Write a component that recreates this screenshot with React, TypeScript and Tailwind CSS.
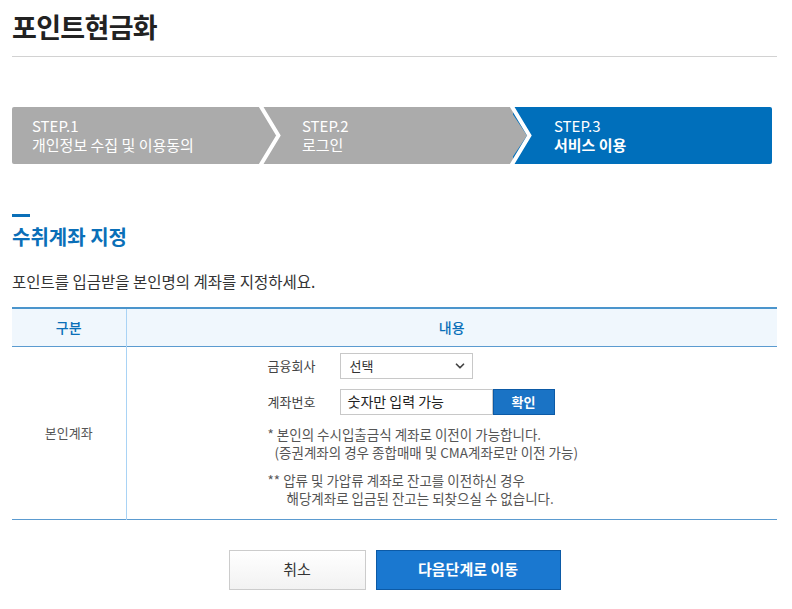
import { ChevronDown } from 'lucide-react';

const font = { fontFamily: '"Noto Sans CJK KR", "Noto Sans", sans-serif' };

function Chevron({ left, fill }: { left: number; fill: string }) {
  return (
    <svg
      className="absolute top-0"
      style={{ left }}
      width="26"
      height="57"
      viewBox="0 0 26 57"
    >
      <polygon points="0,0 19,28.5 0,57" fill={fill} />
      <polyline points="2.4,-3 21.4,28.5 2.4,60" fill="none" stroke="#ffffff" strokeWidth="4" />
    </svg>
  );
}

export default function App() {
  return (
    <div className="bg-white text-[#333] pl-3 pr-[15px] pb-6" style={font}>
      <h1 className="pt-[8px] text-[27px] leading-[38px] font-bold text-[#222] tracking-tight">포인트현금화</h1>
      <div className="mt-[10px] h-px bg-[#d2d2d2]" />

      {/* steps */}
      <div className="relative mt-[50px] mr-[5px] flex h-[57px] overflow-hidden rounded-[2px] text-white text-[15px] leading-[19px]">
        <div className="w-[250px] bg-[#ababab] pl-5 pt-[9px]">
          <div>STEP.1</div>
          <div>개인정보 수집 및 이용동의</div>
        </div>
        <div className="w-[251px] bg-[#ababab] pl-[40px] pt-[9px]">
          <div>STEP.2</div>
          <div>로그인</div>
        </div>
        <div className="flex-1 bg-[#006fbb] pl-[41px] pt-[9px]">
          <div>STEP.3</div>
          <div className="font-bold">서비스 이용</div>
        </div>
        <Chevron left={245} fill="#ababab" />
        <Chevron left={496} fill="#ababab" />
      </div>

      {/* section */}
      <div className="mt-[50px] h-[3px] w-[18px] bg-[#0a6fb8]" />
      <h2 className="mt-[6px] text-[20px] leading-[28px] font-bold text-[#0a6fb8]">수취계좌 지정</h2>
      <p className="mt-[19px] text-[15.5px] leading-[22px] text-[#333]">포인트를 입금받을 본인명의 계좌를 지정하세요.</p>

      <table className="mt-[15px] w-full border-collapse border-t-2 border-t-[#4b95cc] text-[13px]">
        <thead>
          <tr className="bg-[#f0f7fd] border-b border-b-[#5b9bd0]">
            <th className="w-[114px] h-[38px] font-medium text-[14px] text-[#0a6fb8] border-r border-r-[#a9d3f5]">구분</th>
            <th className="font-medium text-[14px] text-[#0a6fb8]">내용</th>
          </tr>
        </thead>
        <tbody>
          <tr className="border-b border-b-[#5b9bd0]">
            <td className="text-center text-[#555] border-r border-r-[#a9d3f5]">본인계좌</td>
            <td className="pl-[141px] pt-[6px] pb-[12px] text-[#555]">
              <div className="flex items-center">
                <span className="w-[72px] text-[#444]">금융회사</span>
                <div className="flex h-[26px] w-[133px] items-center justify-between border border-[#c8c8c8] bg-white pl-[9px] pr-[5px] text-[#333]">
                  <span>선택</span>
                  <ChevronDown size={14} strokeWidth={3} className="text-[#444]" />
                </div>
              </div>
              <div className="mt-[10px] flex items-center">
                <span className="w-[72px] text-[#444]">계좌번호</span>
                <div className="flex h-[26px] w-[153px] items-center border border-[#c8c8c8] bg-white pl-[7px] text-[14px] text-[#222]">
                  숫자만 입력 가능
                </div>
                <button className="h-[26px] w-[62px] border border-[#0c5aa6] bg-[#1a73c5] text-[13px] font-bold text-white">확인</button>
              </div>
              <div className="mt-[10px] text-[13.5px] leading-[18px]">
                <div>* 본인의 수시입출금식 계좌로 이전이 가능합니다.</div>
                <div className="pl-[7px]">(증권계좌의 경우 종합매매 및 CMA계좌로만 이전 가능)</div>
              </div>
              <div className="mt-[10px] text-[13.5px] leading-[18px]">
                <div>** 압류 및 가압류 계좌로 잔고를 이전하신 경우</div>
                <div className="pl-[19px]">해당계좌로 입금된 잔고는 되찾으실 수 없습니다.</div>
              </div>
            </td>
          </tr>
        </tbody>
      </table>

      <div className="mt-[30px] flex justify-center gap-[10px]">
        <button className="h-[40px] w-[137px] border border-[#cccccc] bg-gradient-to-b from-white to-[#f2f2f2] text-[15px] text-[#333]">취소</button>
        <button className="h-[40px] w-[185px] border border-[#0c5aa6] bg-[#1a78d0] text-[15px] font-bold text-white">다음단계로 이동</button>
      </div>
    </div>
  );
}
